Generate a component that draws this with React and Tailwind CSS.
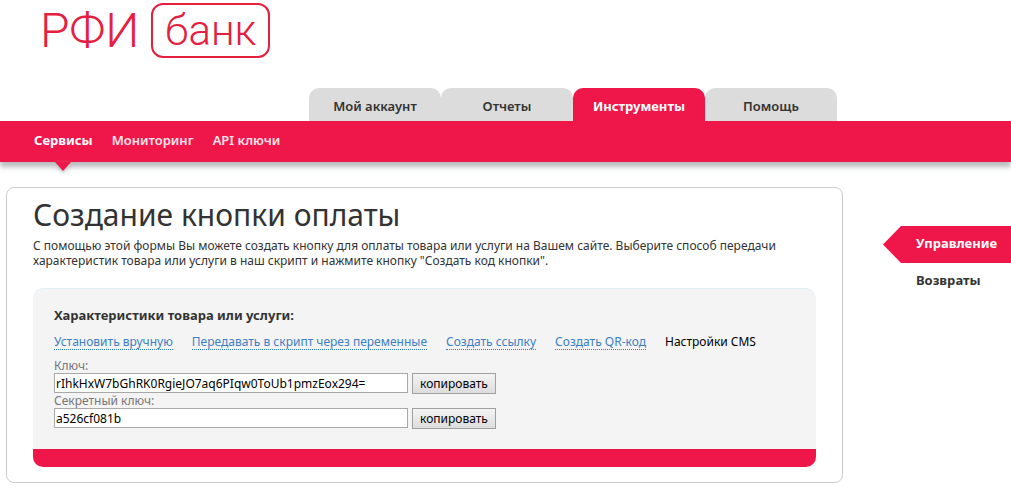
import React, { useState } from 'react';

const tabs = [
  { title: 'Мой аккаунт' },
  { title: 'Отчеты' },
  { title: 'Инструменты', active: true },
  { title: 'Помощь' }
];

const sections = [
  { title: 'Сервисы', active: true },
  { title: 'Мониторинг' },
  { title: 'API ключи' }
];

const modes = ['Установить вручную', 'Передавать в скрипт через переменные', 'Создать ссылку', 'Создать QR-код'];

function Logo() {
  return (
    <a href="#" className="inline-flex items-center gap-3 font-['Roboto',sans-serif] leading-none text-[#e5203f]">
      <span className="text-[48px] font-light">РФИ</span>
      <span className="flex h-[55px] items-center rounded-xl border-2 border-[#e5203f] px-3 text-[42px] font-light">банк</span>
    </a>
  );
}

function KeyField({ id, label, value, onChange }) {
  return (
    <div>
      <label htmlFor={id} className="block text-xs leading-[14px] text-[#777777]">{label}</label>
      <div className="flex items-start gap-1">
        <input
          id={id}
          type="text"
          value={value}
          onChange={(e) => onChange(e.target.value)}
          className="h-5 w-[354px] border border-[#a9a9a9] bg-white px-px text-xs text-black"
        />
        <button
          type="button"
          onClick={() => navigator.clipboard.writeText(value)}
          className="h-[21px] border border-[#a0a0a0] bg-linear-to-b from-[#f4f4f4] to-[#dddddd] px-[7px] text-xs leading-none text-black"
        >
          копировать
        </button>
      </div>
    </div>
  );
}

export default function App() {
  const [key, setKey] = useState('rIhkHxW7bGhRK0RgieJO7aq6PIqw0ToUb1pmzEox294=');
  const [secret, setSecret] = useState('a526cf081b');

  return (
    <div className="bg-white font-['Noto_Sans',sans-serif] text-[#333333]">
      {/* Header */}
      <header>
        <div className="px-10 pt-[3px]">
          <Logo />
        </div>
        <nav className="mt-[30px] flex pl-[309px]">
          {tabs.map((tab) => (
            <a
              key={tab.title}
              href="#"
              className={`flex h-[33px] w-[132px] items-center justify-center rounded-t-[10px] pt-1 text-[13px] ${
                tab.active ? 'bg-[#ef1649] font-bold text-white' : 'bg-[#dcdcdc] font-semibold'
              }`}
            >
              {tab.title}
            </a>
          ))}
        </nav>
        <nav className="flex h-[41px] gap-[19px] bg-[#ef1649] px-[34px] text-[13px] text-white shadow-[0_5px_5px_#b8bcbe]">
          {sections.map((section) => (
            <a key={section.title} href="#" className={`relative flex items-center pb-0.5 ${section.active ? 'font-bold' : 'font-semibold text-[#ffe3e9]'}`}>
              {section.title}
              {section.active && (
                <svg className="absolute top-full left-1/2 h-[9px] w-4 -translate-x-1/2 drop-shadow-[0_2px_2px_#b8bcbe]" viewBox="0 0 16 9">
                  <path d="M0 0h16L8 9z" fill="#ef1649" />
                </svg>
              )}
            </a>
          ))}
        </nav>
      </header>

      <div className="flex items-start gap-10 pt-[25px] pl-1.5">
        {/* Payment button form */}
        <main className="flex-1 rounded-lg border border-[#cccccc] px-[26px] pt-2 pb-[15px]">
          <h1 className="text-[30px] leading-[38px]">Создание кнопки оплаты</h1>
          <p className="pt-1 text-xs leading-[15px]">
            С помощью этой формы Вы можете создать кнопку для оплаты товара или услуги на Вашем сайте. Выберите способ передачи характеристик товара или услуги в наш скрипт и нажмите кнопку "Создать код кнопки".
          </p>

          <section className="mt-5 overflow-hidden rounded-[10px] bg-[#f4f4f4]">
            <div className="rounded-t-[10px] border-t border-[#e1eff7] px-[21px] pt-[17px] pb-5">
              <h2 className="text-[13px] leading-[18px] font-bold">Характеристики товара или услуги:</h2>
              <div className="flex flex-wrap gap-[19px] pt-[10px] pb-[9px] text-xs leading-[15px]">
                {modes.map((mode) => (
                  <a key={mode} href="#" className="border-b border-dotted border-[#2a7fc4] text-[#3b7fc4]">{mode}</a>
                ))}
                <span className="text-black">Настройки CMS</span>
              </div>
              <KeyField id="key" label="Ключ:" value={key} onChange={setKey} />
              <KeyField id="secret" label="Секретный ключ:" value={secret} onChange={setSecret} />
            </div>
            <div className="h-[18px] bg-[#ef1649]"></div>
          </section>
        </main>

        {/* Side menu */}
        <aside className="w-32 pt-[39px] text-[13px] font-bold">
          <a href="#" className="flex h-[37px] items-center bg-[#ef1649] pb-0.5 pl-[33px] text-white [clip-path:polygon(0_50%,18px_0,100%_0,100%_100%,18px_100%)]">
            Управление
          </a>
          <a href="#" className="flex h-[37px] items-center pb-0.5 pl-[33px]">Возвраты</a>
        </aside>
      </div>
    </div>
  );
}
